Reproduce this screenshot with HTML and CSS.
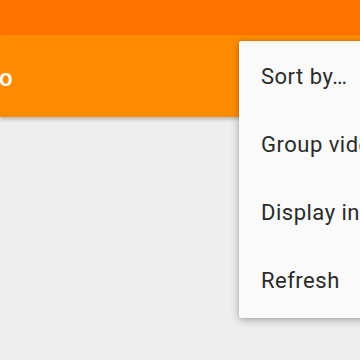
FILE: index.html
```html
<!DOCTYPE html>
<html lang="en">
<head>
  <meta charset="UTF-8" />
  <meta name="viewport" content="width=device-width, initial-scale=1.0"/>
  <title>Videos</title>
  <link rel="stylesheet" href="styles.css">
</head>
<body>

<div class="status-bar"></div>

<div class="toolbar">
  <span class="toolbar-title">o</span>
</div>

<div class="content"></div>

<ul class="menu">
  <li class="menu-item">Sort by…</li>
  <li class="menu-item">Group videos</li>
  <li class="menu-item">Display in list</li>
  <li class="menu-item">Refresh</li>
</ul>

</body>
</html>
```

FILE: styles.css
```css
  html, body {
    margin: 0;
    width: 360px;
    height: 360px;
    overflow: hidden;
  }

  body {
    font-family: Roboto, "Noto Sans", sans-serif;
    background: #eeeeee;
    position: relative;
  }

  .status-bar {
    height: 35px;
    background: #ff7300;
  }

  .toolbar {
    height: 82px;
    background: #ff8c00;
    display: flex;
    align-items: center;
    box-shadow: 0 2px 4px rgba(0,0,0,0.25);
    position: relative;
  }

  .toolbar-title {
    color: #fff;
    font-size: 24px;
    font-weight: 500;
    margin-left: -1px;
    margin-top: 4px;
  }

  .menu {
    position: absolute; /* popup sobre la toolbar */
    top: 41px;
    left: 239px;
    width: 200px;
    margin: 0;
    padding: 2px 0 3px;
    list-style: none;
    background: #fafafa;
    border-radius: 2px;
    box-shadow: 0 2px 8px rgba(0,0,0,0.3), 0 0 2px rgba(0,0,0,0.12);
  }

  .menu-item {
    height: 68px;
    line-height: 68px;
    padding-left: 22px;
    font-size: 22px;
    letter-spacing: 0.5px;
    color: #2a2a2a;
    white-space: nowrap;
  }
```
